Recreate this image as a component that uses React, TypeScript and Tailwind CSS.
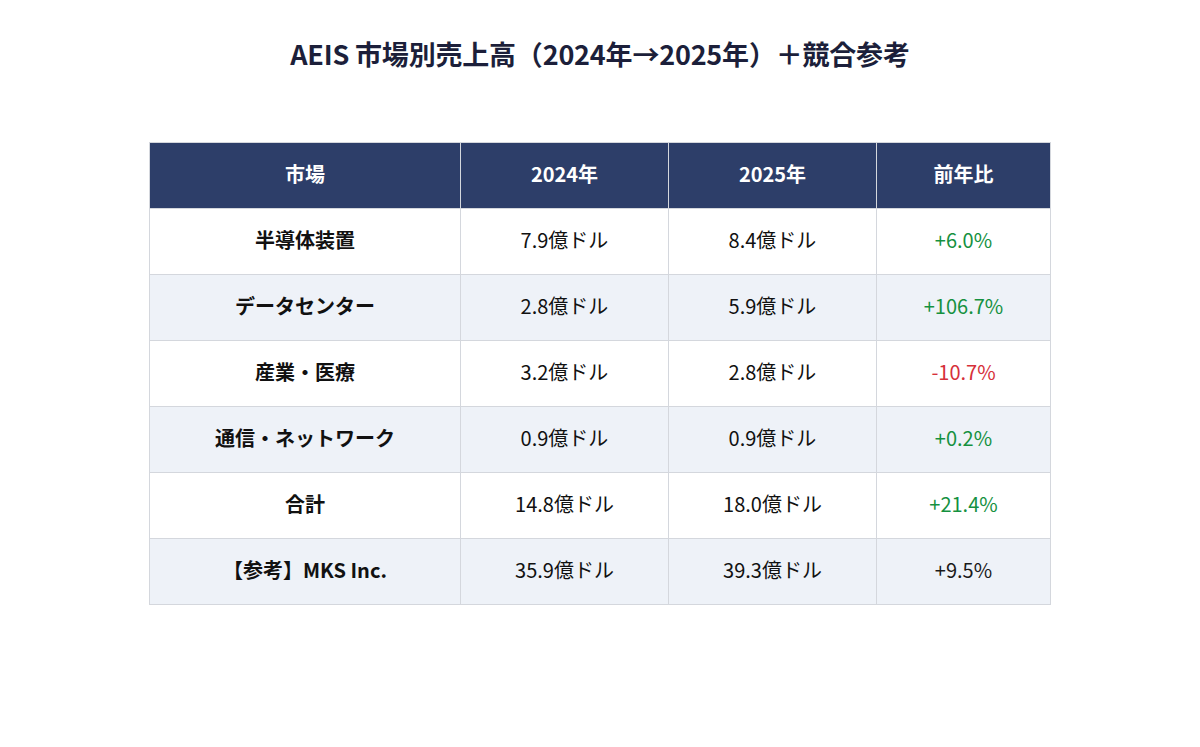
const rows = [
  { market: "半導体装置", y2024: "7.9億ドル", y2025: "8.4億ドル", change: "+6.0%", tone: "up" },
  { market: "データセンター", y2024: "2.8億ドル", y2025: "5.9億ドル", change: "+106.7%", tone: "up" },
  { market: "産業・医療", y2024: "3.2億ドル", y2025: "2.8億ドル", change: "-10.7%", tone: "down" },
  { market: "通信・ネットワーク", y2024: "0.9億ドル", y2025: "0.9億ドル", change: "+0.2%", tone: "up" },
  { market: "合計", y2024: "14.8億ドル", y2025: "18.0億ドル", change: "+21.4%", tone: "up" },
  { market: "【参考】MKS Inc.", y2024: "35.9億ドル", y2025: "39.3億ドル", change: "+9.5%", tone: "plain" },
]

const headers = ["市場", "2024年", "2025年", "前年比"]

const toneClass = (tone: string) =>
  tone === "up" ? "text-[#15913f]" : tone === "down" ? "text-[#d6303a]" : "text-[#1a1a1a]"

export default function App() {
  return (
    <div
      className="w-[1200px] h-[747px] bg-white flex flex-col items-center"
      style={{ fontFamily: '"Noto Sans CJK JP", "Noto Sans", sans-serif' }}
    >
      <h1 className="mt-[33px] text-[27px] leading-[42px] font-bold text-[#1c1f3a] tracking-[-0.2px]">
        AEIS 市場別売上高（2024年→2025年）＋競合参考
      </h1>

      <table className="mt-[67px] w-[901px] border-collapse table-fixed">
        <colgroup>
          <col className="w-[311px]" />
          <col className="w-[208px]" />
          <col className="w-[208px]" />
          <col className="w-[174px]" />
        </colgroup>
        <thead>
          <tr className="h-[66px] bg-[#2d3e69]">
            {headers.map((h) => (
              <th
                key={h}
                className="border border-[#d4d7dd] text-white text-[20px] leading-[28px] pb-[4px] font-bold text-center"
              >
                {h}
              </th>
            ))}
          </tr>
        </thead>
        <tbody>
          {rows.map((r, i) => (
            <tr key={r.market} className={`h-[66px] ${i % 2 === 1 ? "bg-[#eef2f8]" : "bg-white"}`}>
              <td className="border border-[#d4d7dd] text-center text-[20px] leading-[28px] pb-[4px] font-bold text-[#111]">
                {r.market}
              </td>
              <td className="border border-[#d4d7dd] text-center text-[20px] leading-[28px] pb-[4px] text-[#111]">{r.y2024}</td>
              <td className="border border-[#d4d7dd] text-center text-[20px] leading-[28px] pb-[4px] text-[#111]">{r.y2025}</td>
              <td className={`border border-[#d4d7dd] text-center text-[20px] leading-[28px] pb-[4px] ${toneClass(r.tone)}`}>
                {r.change}
              </td>
            </tr>
          ))}
        </tbody>
      </table>
    </div>
  )
}
